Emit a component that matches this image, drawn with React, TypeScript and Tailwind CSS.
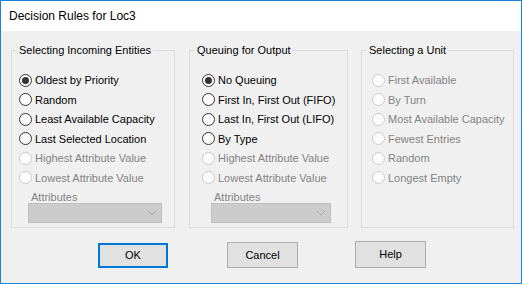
import React from 'react';

type Opt = { label: string; checked?: boolean; disabled?: boolean };

const Radio: React.FC<Opt> = ({ label, checked, disabled }) => {
    return (
        <div className="flex items-center h-[19.5px]">
            <div className={"w-[13px] h-[13px] rounded-full border flex items-center justify-center shrink-0 " + (disabled ? "border-[#cccccc] bg-[#fcfcfc]" : "border-[#333333] bg-white")}>
                {checked && <div className="w-[7px] h-[7px] rounded-full bg-[#333333]" />}
            </div>
            <span className={"ml-[3px] whitespace-nowrap " + (disabled ? "text-[#838383]" : "text-black")}>{label}</span>
        </div>
    );
};

const Attributes: React.FC<{ width: number }> = ({ width }) => {
    return (
        <div className="mt-[3px]">
            <div className="text-[#838383] ml-[3px] leading-[12px]">Attributes</div>
            <div className={"h-[20px] bg-[#cccccc] border border-[#bfbfbf] flex items-center justify-end pr-[4px] " + (width === 134 ? "w-[134px]" : "w-[120px]")}>
                <svg width="10" height="6" viewBox="0 0 10 6">
                    <path d="M1 1l4 4 4-4" fill="none" stroke="#a8a8a8" strokeWidth="1" />
                </svg>
            </div>
        </div>
    );
};

const App: React.FC = () => {
    const incoming: Opt[] = [
        { label: "Oldest by Priority", checked: true },
        { label: "Random" },
        { label: "Least Available Capacity" },
        { label: "Last Selected Location" },
        { label: "Highest Attribute Value", disabled: true },
        { label: "Lowest Attribute Value", disabled: true },
    ];
    const queuing: Opt[] = [
        { label: "No Queuing", checked: true },
        { label: "First In, First Out (FIFO)" },
        { label: "Last In, First Out (LIFO)" },
        { label: "By Type" },
        { label: "Highest Attribute Value", disabled: true },
        { label: "Lowest Attribute Value", disabled: true },
    ];
    const unit: Opt[] = [
        { label: "First Available", disabled: true },
        { label: "By Turn", disabled: true },
        { label: "Most Available Capacity", disabled: true },
        { label: "Fewest Entries", disabled: true },
        { label: "Random", disabled: true },
        { label: "Longest Empty", disabled: true },
    ];

    return (
        <div className="w-[523px] h-[284px] bg-white font-['Liberation_Sans',Arial,sans-serif] text-[11px]">
            <div className="w-[522px] h-[284px] border border-[#1883d7] flex flex-col">
                {/* title bar */}
                <div className="h-[30px] bg-white flex items-center pl-[8px] text-black text-[12px]">
                    Decision Rules for Loc3
                </div>

                <div className="flex-1 bg-[#f0f0f0] flex flex-col">
                    <div className="flex pl-[10px] mt-[11px]">
                        <fieldset className="w-[164px] h-[186px] border border-[#dcdcdc]">
                            <legend className="ml-[5px] px-[2px] text-black">Selecting Incoming Entities</legend>
                            <div className="pl-[7px] mt-[12px]">
                                {incoming.map((o) => <Radio key={o.label} {...o} />)}
                            </div>
                            <div className="ml-[16px]">
                                <Attributes width={134} />
                            </div>
                        </fieldset>

                        <fieldset className="ml-[14px] w-[159px] h-[186px] border border-[#dcdcdc]">
                            <legend className="ml-[5px] px-[2px] text-black">Queuing for Output</legend>
                            <div className="pl-[12px] mt-[12px]">
                                {queuing.map((o) => <Radio key={o.label} {...o} />)}
                            </div>
                            <div className="ml-[21px]">
                                <Attributes width={120} />
                            </div>
                        </fieldset>

                        <fieldset className="ml-[13px] w-[153px] h-[186px] border border-[#dcdcdc]">
                            <legend className="ml-[5px] px-[2px] text-black">Selecting a Unit</legend>
                            <div className="pl-[10px] mt-[12px]">
                                {unit.map((o) => <Radio key={o.label} {...o} />)}
                            </div>
                        </fieldset>
                    </div>

                    <div className="flex items-start pl-[97px] mt-[13px] text-black">
                        <button className="w-[70px] h-[25px] mt-[2px] bg-[#e1e1e1] border-2 border-[#0078d7]">OK</button>
                        <button className="ml-[59px] w-[71px] h-[26px] mt-[1px] bg-[#e1e1e1] border border-[#adadad]">Cancel</button>
                        <button className="ml-[57px] w-[71px] h-[27px] bg-[#e1e1e1] border border-[#adadad]">Help</button>
                    </div>
                </div>
            </div>
        </div>
    );
};

export default App;
